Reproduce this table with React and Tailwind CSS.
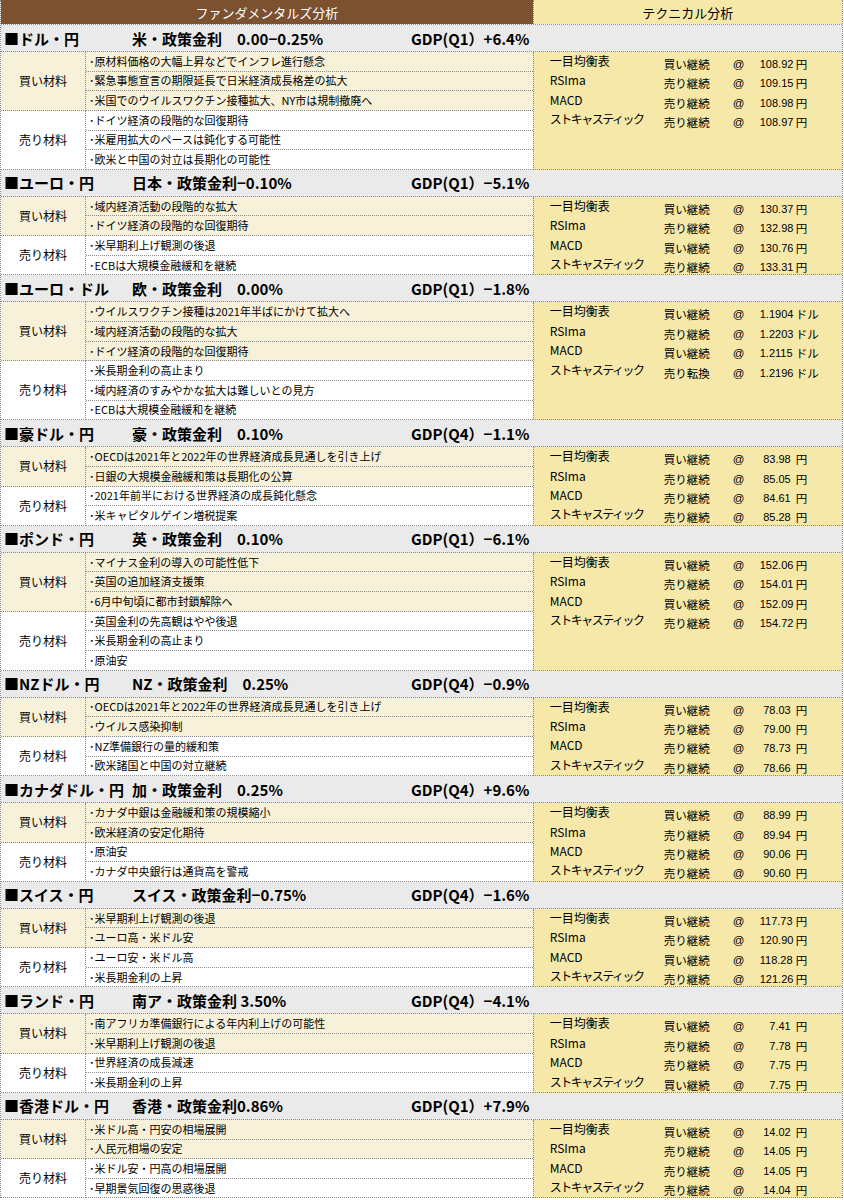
import React from 'react'

const sections = [
  {
    pair: '■ドル・円', policy: '米・政策金利　0.00−0.25%', gdp: 'GDP(Q1）+6.4%', unit: '円',
    buy: ['原材料価格の大幅上昇などでインフレ進行懸念', '緊急事態宣言の期限延長で日米経済成長格差の拡大', '米国でのウイルスワクチン接種拡大、NY市は規制撤廃へ'],
    sell: ['ドイツ経済の段階的な回復期待', '米雇用拡大のペースは鈍化する可能性', '欧米と中国の対立は長期化の可能性'],
    tech: [['買い継続', '108.92'], ['売り継続', '109.15'], ['売り継続', '108.98'], ['売り継続', '108.97']],
  },
  {
    pair: '■ユーロ・円', policy: '日本・政策金利−0.10%', gdp: 'GDP(Q1）−5.1%', unit: '円',
    buy: ['域内経済活動の段階的な拡大', 'ドイツ経済の段階的な回復期待'],
    sell: ['米早期利上げ観測の後退', 'ECBは大規模金融緩和を継続'],
    tech: [['買い継続', '130.37'], ['売り継続', '132.98'], ['買い継続', '130.76'], ['売り継続', '133.31']],
  },
  {
    pair: '■ユーロ・ドル', policy: '欧・政策金利　0.00%', gdp: 'GDP(Q1）−1.8%', unit: 'ドル',
    buy: ['ウイルスワクチン接種は2021年半ばにかけて拡大へ', '域内経済活動の段階的な拡大', 'ドイツ経済の段階的な回復期待'],
    sell: ['米長期金利の高止まり', '域内経済のすみやかな拡大は難しいとの見方', 'ECBは大規模金融緩和を継続'],
    tech: [['買い継続', '1.1904'], ['売り継続', '1.2203'], ['買い継続', '1.2115'], ['売り転換', '1.2196']],
  },
  {
    pair: '■豪ドル・円', policy: '豪・政策金利　0.10%', gdp: 'GDP(Q4）−1.1%', unit: '円',
    buy: ['OECDは2021年と2022年の世界経済成長見通しを引き上げ', '日銀の大規模金融緩和策は長期化の公算'],
    sell: ['2021年前半における世界経済の成長鈍化懸念', '米キャピタルゲイン増税提案'],
    tech: [['買い継続', '83.98'], ['売り継続', '85.05'], ['売り継続', '84.61'], ['売り継続', '85.28']],
  },
  {
    pair: '■ポンド・円', policy: '英・政策金利　0.10%', gdp: 'GDP(Q1）−6.1%', unit: '円',
    buy: ['マイナス金利の導入の可能性低下', '英国の追加経済支援策', '6月中旬頃に都市封鎖解除へ'],
    sell: ['英国金利の先高観はやや後退', '米長期金利の高止まり', '原油安'],
    tech: [['買い継続', '152.06'], ['売り継続', '154.01'], ['買い継続', '152.09'], ['売り継続', '154.72']],
  },
  {
    pair: '■NZドル・円', policy: 'NZ・政策金利　0.25%', gdp: 'GDP(Q4）−0.9%', unit: '円',
    buy: ['OECDは2021年と2022年の世界経済成長見通しを引き上げ', 'ウイルス感染抑制'],
    sell: ['NZ準備銀行の量的緩和策', '欧米諸国と中国の対立継続'],
    tech: [['買い継続', '78.03'], ['売り継続', '79.00'], ['売り継続', '78.73'], ['売り継続', '78.66']],
  },
  {
    pair: '■カナダドル・円', policy: '加・政策金利　0.25%', gdp: 'GDP(Q4）+9.6%', unit: '円',
    buy: ['カナダ中銀は金融緩和策の規模縮小', '欧米経済の安定化期待'],
    sell: ['原油安', 'カナダ中央銀行は通貨高を警戒'],
    tech: [['買い継続', '88.99'], ['売り継続', '89.94'], ['売り継続', '90.06'], ['売り継続', '90.60']],
  },
  {
    pair: '■スイス・円', policy: 'スイス・政策金利−0.75%', gdp: 'GDP(Q4）−1.6%', unit: '円',
    buy: ['米早期利上げ観測の後退', 'ユーロ高・米ドル安'],
    sell: ['ユーロ安・米ドル高', '米長期金利の上昇'],
    tech: [['買い継続', '117.73'], ['売り継続', '120.90'], ['買い継続', '118.28'], ['売り継続', '121.26']],
  },
  {
    pair: '■ランド・円', policy: '南ア・政策金利 3.50%', gdp: 'GDP(Q4）−4.1%', unit: '円',
    buy: ['南アフリカ準備銀行による年内利上げの可能性', '米早期利上げ観測の後退'],
    sell: ['世界経済の成長減速', '米長期金利の上昇'],
    tech: [['買い継続', '7.41'], ['売り継続', '7.78'], ['売り継続', '7.75'], ['買い継続', '7.75']],
  },
  {
    pair: '■香港ドル・円', policy: '香港・政策金利0.86%', gdp: 'GDP(Q1）+7.9%', unit: '円',
    buy: ['米ドル高・円安の相場展開', '人民元相場の安定'],
    sell: ['米ドル安・円高の相場展開', '早期景気回復の思惑後退'],
    tech: [['買い継続', '14.02'], ['売り継続', '14.05'], ['売り継続', '14.05'], ['売り継続', '14.04']],
  },
]

const techLabels = ['一目均衡表', 'RSIma', 'MACD', 'ストキャスティック']

function Group({ label, items, bg }) {
  return (
    <div className={`flex ${bg}`}>
      <div className="w-[85px] flex items-center justify-center border-r border-b border-dotted border-[#8a8a8a] text-[12px]">
        {label}
      </div>
      <div className="flex-1 flex flex-col">
        {items.map((t, i) => (
          <div key={i} className="h-[19.65px] flex items-center pl-[3px] border-b border-dotted border-[#8a8a8a] text-[11px] leading-none whitespace-nowrap overflow-hidden">
            ･{t}
          </div>
        ))}
      </div>
    </div>
  )
}

function Section({ s }) {
  return (
    <div>
      <div className="h-[27px] flex items-center bg-[#eaeaea] border-b border-dotted border-[#8a8a8a] text-[15px] font-bold leading-none whitespace-nowrap">
        <span className="w-[131px] pl-[3px]">{s.pair}</span>
        <span className="w-[279px]">{s.policy}</span>
        <span>{s.gdp}</span>
      </div>
      <div className="flex">
        <div className="w-[533px]">
          <Group label="買い材料" items={s.buy} bg="bg-[#f7f1da]" />
          <Group label="売り材料" items={s.sell} bg="bg-white" />
        </div>
        <div className="w-[310px] bg-[#f5e8a8] border-l border-b border-dotted border-[#8a8a8a]">
          {s.tech.map(([sig, val], i) => (
            <div key={i} className="h-[19.4px] flex text-[11.5px] leading-none whitespace-nowrap">
              <span className={`w-[130px] pl-[16px] pt-[3px] text-[12px] ${i === 3 ? 'tracking-[-1.5px]' : ''}`}>{techLabels[i]}</span>
              <span className="w-[69px] pt-[7px]">{sig}</span>
              <span className="w-[27px] pt-[7px] [font-family:'Liberation_Sans',sans-serif]">@</span>
              <span className="w-[31px] pt-[7px] text-right text-[11px] [font-family:'Liberation_Sans',sans-serif]">{val}</span>
              <span className="pl-[5px] pt-[7px]">{s.unit}</span>
            </div>
          ))}
        </div>
      </div>
    </div>
  )
}

export default function App() {
  return (
    <div className="w-[844px] bg-white text-black [font-family:'Noto_Sans_CJK_JP','Noto_Sans',sans-serif]">
      <div className="w-[843px] border-l border-r border-dotted border-[#8a8a8a]">
        <div className="h-[25px] flex border-b border-dotted border-[#8a8a8a] text-[13px] leading-none">
          <div className="w-[533px] bg-[#7b5130] text-white flex items-center justify-center">ファンダメンタルズ分析</div>
          <div className="w-[310px] bg-[#f5e8a8] flex items-center justify-center border-l border-dotted border-[#8a8a8a]">テクニカル分析</div>
        </div>
        {sections.map((s, i) => (
          <Section key={i} s={s} />
        ))}
      </div>
    </div>
  )
}
